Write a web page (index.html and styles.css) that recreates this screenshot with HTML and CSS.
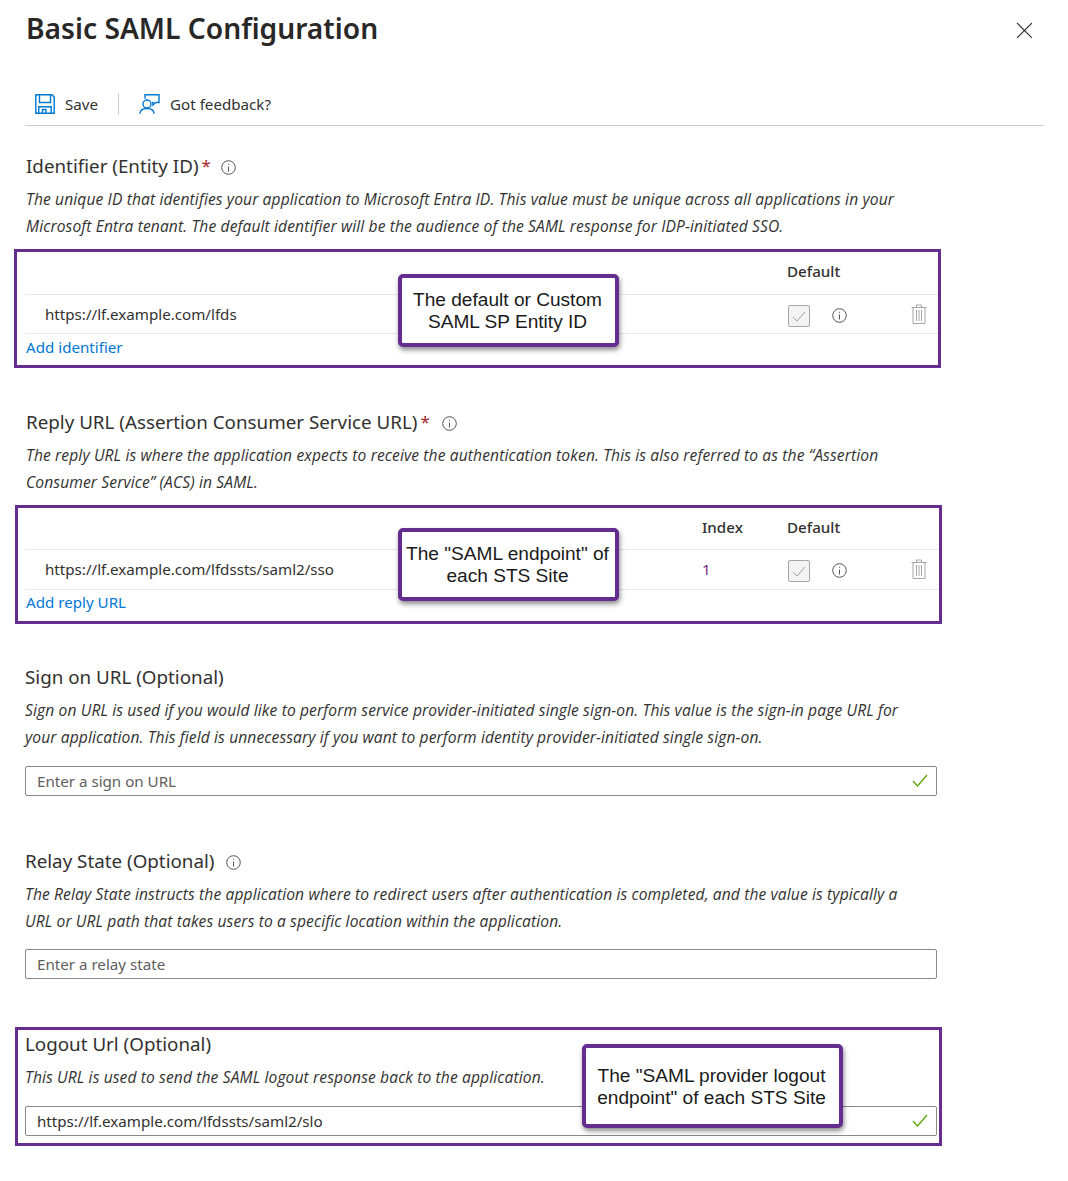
FILE: index.html
```html
<!DOCTYPE html>
<html lang="en">
<head>
    <meta charset="UTF-8">
    <title>Basic SAML Configuration</title>
    <link rel="stylesheet" href="styles.css">
</head>
<body>
    <div class="panel-header">
        <h1>Basic SAML Configuration</h1>
        <svg class="close-icon" width="16" height="16" viewBox="0 0 16 16"><path d="M1 1L16 16M16 1L1 16" stroke="#333" stroke-width="1.1" fill="none"/></svg>
    </div>

    <div class="toolbar">
        <div class="tool">
            <svg width="20" height="20" viewBox="0 0 20 20" fill="none" stroke="#0078d4" stroke-width="1.4"><path d="M0.8 0.8H17L19.2 3V19.2H0.8Z"/><path d="M4.5 0.8V8.5H15.5V0.8M3.8 19.2V12.8H16.2V19.2"/><path d="M7.5 19.2V15.5H11V19.2"/></svg>
            <span>Save</span>
        </div>
        <div class="tool-sep"></div>
        <div class="tool">
            <svg width="21" height="20" viewBox="0 0 21 20" fill="none" stroke="#0078d4" stroke-width="1.4"><circle cx="8" cy="10" r="4"/><path d="M1 19.8C1 16 4 14.5 8 14.5C12 14.5 15 16 15 19.8"/><path d="M6 4.8V0.8H20V8.5H16.5L14 11V8.5H13"/></svg>
            <span>Got feedback?</span>
        </div>
    </div>

    <section class="field field-identifier">
        <div class="field-title">Identifier (Entity ID) <span class="req">*</span><svg class="info" width="15" height="15" viewBox="0 0 15 15"><use href="#info-glyph"/></svg></div>
        <p class="field-desc">The unique ID that identifies your application to Microsoft Entra ID. This value must be unique across all applications in your<br>Microsoft Entra tenant. The default identifier will be the audience of the SAML response for IDP-initiated SSO.</p>
    </section>

    <div class="frame frame-table frame-first">
        <div class="url-head"><span class="col-default">Default</span></div>
        <div class="url-row">
            <span class="url-text">https://lf.example.com/lfds</span>
            <span class="check-box"><svg width="14" height="11" viewBox="0 0 14 11"><path d="M1 6L5 10L13 1" stroke="#a0a0a0" fill="none"/></svg></span>
            <svg class="info row-info" width="15" height="15" viewBox="0 0 15 15"><use href="#info-glyph"/></svg>
            <svg class="trash" width="16" height="20" viewBox="0 0 16 20"><use href="#trash-glyph"/></svg>
        </div>
        <a class="add-link">Add identifier</a>
        <div class="callout callout-one">The default or Custom<br>SAML SP Entity ID</div>
    </div>

    <section class="field field-reply">
        <div class="field-title">Reply URL (Assertion Consumer Service URL) <span class="req">*</span><svg class="info" width="15" height="15" viewBox="0 0 15 15"><use href="#info-glyph"/></svg></div>
        <p class="field-desc">The reply URL is where the application expects to receive the authentication token. This is also referred to as the “Assertion<br>Consumer Service” (ACS) in SAML.</p>
    </section>

    <div class="frame frame-table frame-second">
        <div class="url-head"><span class="col-index">Index</span><span class="col-default">Default</span></div>
        <div class="url-row">
            <span class="url-text">https://lf.example.com/lfdssts/saml2/sso</span>
            <span class="index-val">1</span>
            <span class="check-box"><svg width="14" height="11" viewBox="0 0 14 11"><path d="M1 6L5 10L13 1" stroke="#a0a0a0" fill="none"/></svg></span>
            <svg class="info row-info" width="15" height="15" viewBox="0 0 15 15"><use href="#info-glyph"/></svg>
            <svg class="trash" width="16" height="20" viewBox="0 0 16 20"><use href="#trash-glyph"/></svg>
        </div>
        <a class="add-link">Add reply URL</a>
        <div class="callout callout-two">The "SAML endpoint" of<br>each STS Site</div>
    </div>

    <section class="field field-signon">
        <div class="field-title">Sign on URL (Optional)</div>
        <p class="field-desc">Sign on URL is used if you would like to perform service provider-initiated single sign-on. This value is the sign-in page URL for<br>your application. This field is unnecessary if you want to perform identity provider-initiated single sign-on.</p>
        <div class="text-input placeholder">Enter a sign on URL<svg class="ok" width="16" height="13" viewBox="0 0 16 13"><path d="M1 7L5.5 12L15 1" stroke="#57a300" stroke-width="1.2" fill="none"/></svg></div>
    </section>

    <section class="field field-relay">
        <div class="field-title">Relay State (Optional)<svg class="info" width="15" height="15" viewBox="0 0 15 15"><use href="#info-glyph"/></svg></div>
        <p class="field-desc">The Relay State instructs the application where to redirect users after authentication is completed, and the value is typically a<br>URL or URL path that takes users to a specific location within the application.</p>
        <div class="text-input placeholder">Enter a relay state</div>
    </section>

    <div class="frame frame-logout">
        <div class="field-title">Logout Url (Optional)</div>
        <p class="field-desc">This URL is used to send the SAML logout response back to the application.</p>
        <div class="text-input">https://lf.example.com/lfdssts/saml2/slo<svg class="ok" width="16" height="13" viewBox="0 0 16 13"><path d="M1 7L5.5 12L15 1" stroke="#57a300" stroke-width="1.2" fill="none"/></svg></div>
        <div class="callout callout-three">The "SAML provider logout<br>endpoint" of each STS Site</div>
    </div>

    <svg class="defs" width="0" height="0">
        <symbol id="info-glyph" viewBox="0 0 15 15">
            <circle cx="7.5" cy="7.5" r="6.8" fill="none" stroke="#555" stroke-width="1"/>
            <path d="M7.5 6.5V11.5" stroke="#555" stroke-width="1"/>
            <rect x="7" y="3.8" width="1" height="1" fill="#555"/>
        </symbol>
        <symbol id="trash-glyph" viewBox="0 0 16 20">
            <path d="M0.5 3.5H15.5M5.5 3.5V1H10.5V3.5M2 3.5V19.5H14V3.5" fill="none" stroke="#a6a6a6"/>
            <path d="M5.5 6V17M8 6V17M10.5 6V17" stroke="#a6a6a6"/>
        </symbol>
    </svg>
</body>
</html>
```

FILE: styles.css
```css
html, body {
    margin: 0;
    padding: 0;
    background-color: white;
}
body {
    font-family: 'Noto Sans', 'Open Sans', sans-serif;
    font-size: 15.15px;
    color: #323130;
    width: 1068px;
    height: 1181px;
    overflow: hidden;
}
.panel-header {
    height: 59px;
    display: flex;
    justify-content: space-between;
    align-items: flex-start;
    padding: 0 36px 0 26px;
}
.panel-header h1 {
    margin: 0;
    font-size: 28.2px;
    font-weight: 600;
    line-height: 56px;
    color: #292827;
}
.close-icon {
    margin-top: 22px;
}
.toolbar {
    margin: 31px 24px 0 25px;
    height: 35px;
    display: flex;
    align-items: flex-start;
    border-bottom: 1px solid #ccc;
}
.tool {
    display: flex;
    align-items: center;
    height: 28px;
    gap: 10px;
    padding-left: 10px;
}
.tool-sep {
    width: 1px;
    height: 22px;
    margin: 3px 10px 0 20px;
    background-color: #ccc;
}
.field {
    margin-left: 26px;
    width: 880px;
}
.field-title {
    font-size: 18.8px;
    line-height: 26px;
    display: flex;
    align-items: center;
}
.req {
    color: #a4262c;
    margin-left: 3px;
    font-size: 17px;
}
.info {
    margin: 2px 0 0 10px;
    flex: none;
}
.field-reply .info, .field-relay .info {
    margin-left: 12px;
}
.field-desc {
    margin: 7px 0 0;
    font-family: 'Open Sans', 'Noto Sans', sans-serif;
    font-size: 15.6px;
    letter-spacing: 0.12px;
    font-style: italic;
    line-height: 27px;
    white-space: nowrap;
}
.field-identifier {
    padding-top: 27px;
}
.frame {
    position: relative;
    box-sizing: border-box;
    margin-left: 15px;
    width: 927px;
    border: 3px solid #652d90;
}
.frame-table {
    height: 119px;
}
.frame-first {
    margin-left: 14px;
    margin-top: 9px;
}
.frame-second {
    margin-top: 9px;
}
.url-head {
    height: 42px;
    box-sizing: border-box;
    border-bottom: 1px solid #e8e8e8;
    margin-left: 8px;
    position: relative;
    font-weight: 500;
    line-height: 38px;
}
.frame-first .url-head {
    height: 43px;
}
.frame-second .url-head {
    margin-left: 7px;
}
.col-default {
    position: absolute;
    left: 762px;
}
.col-index {
    position: absolute;
    left: 677px;
}
.url-row {
    height: 39px;
    box-sizing: border-box;
    border-bottom: 1px solid #e8e8e8;
    margin-left: 8px;
    display: flex;
    align-items: center;
    position: relative;
}
.frame-second .url-row {
    height: 40px;
    margin-left: 7px;
    padding-bottom: 2px;
}
.url-text {
    margin-left: 20px;
}
.index-val {
    position: absolute;
    left: 677px;
    color: #7a2d80;
}
.check-box {
    position: absolute;
    left: 763px;
    top: 10px;
    box-sizing: border-box;
    width: 22px;
    height: 22px;
    border: 1px solid #a6a6a6;
    border-radius: 2px;
    background-color: #f3f3f3;
    display: flex;
    align-items: center;
    justify-content: center;
}
.row-info {
    position: absolute;
    left: 807px;
    top: 13px;
    margin: 0;
}
.trash {
    position: absolute;
    left: 886px;
    top: 9px;
}
.add-link {
    display: block;
    margin-left: 9px;
    line-height: 26px;
    color: #0078d4;
}
.frame-second .add-link {
    margin-left: 8px;
    line-height: 24px;
}
.field-reply {
    padding-top: 41px;
}
.field-signon {
    padding-top: 40px;
    margin-left: 25px;
    width: 912px;
}
.field-relay {
    padding-top: 52px;
    margin-left: 25px;
    width: 912px;
}
.field-relay .text-input {
    margin-top: 14px;
}
.text-input {
    box-sizing: border-box;
    height: 30px;
    margin-top: 15px;
    border: 1px solid #8a8886;
    border-radius: 2px;
    padding: 0 11px 1px;
    line-height: 28px;
    display: flex;
    justify-content: space-between;
    align-items: center;
}
.placeholder {
    color: #605e5c;
}
.ok {
    margin-right: -3px;
}
.frame-logout {
    margin-top: 48px;
    height: 119px;
    padding: 1px 2px 0 7px;
}
.callout {
    position: absolute;
    box-sizing: border-box;
    background-color: white;
    border: 4px solid #652d90;
    border-radius: 5px;
    box-shadow: 1px 3px 5px rgba(0, 0, 0, 0.45);
    font-family: 'Liberation Sans', Arial, sans-serif;
    font-size: 19.1px;
    line-height: 22px;
    color: #1a1a1a;
    text-align: center;
    padding-right: 2px;
    display: flex;
    align-items: center;
    justify-content: center;
}
.callout-one {
    left: 381px;
    top: 22px;
    width: 221px;
    height: 73px;
}
.callout-two {
    left: 380px;
    top: 20px;
    width: 221px;
    height: 73px;
}
.callout-three {
    left: 564px;
    top: 14px;
    width: 261px;
    height: 84px;
    padding-top: 2px;
}
.defs {
    position: absolute;
}
```
